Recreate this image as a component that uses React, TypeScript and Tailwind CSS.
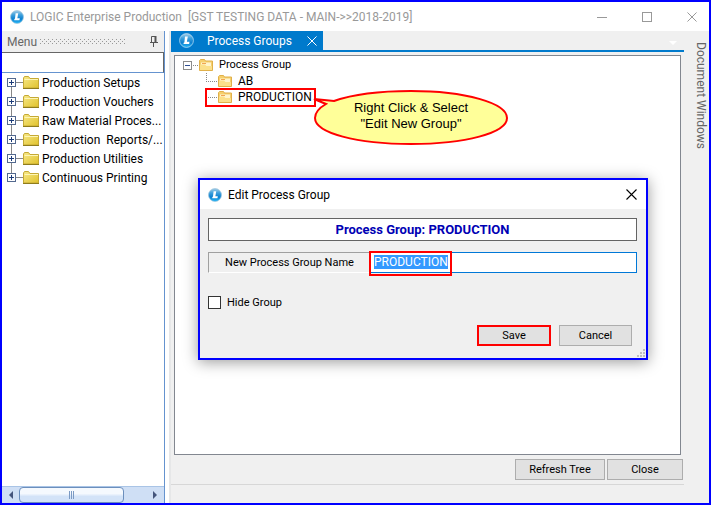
import { useEffect, useRef, useState } from "react";
import { clsx } from "clsx";

const menuItems = [
  "Production Setups",
  "Production Vouchers",
  "Raw Material Proces...",
  "Production  Reports/...",
  "Production Utilities",
  "Continuous Printing",
];

function Logo({ size, ring = false }: { size: number; ring?: boolean }) {
  return (
    <svg width={size} height={size} viewBox="0 0 16 16" className="shrink-0">
      <defs>
        <linearGradient id="logoFill" x1="0" y1="0" x2="0" y2="1">
          <stop offset="0" stopColor="#a5cde6" />
          <stop offset="0.35" stopColor="#3b9fdc" />
          <stop offset="0.65" stopColor="#0d80d0" />
          <stop offset="1" stopColor="#25b8f8" />
        </linearGradient>
      </defs>
      <circle cx="8" cy="8" r="7.4" fill="url(#logoFill)" stroke={ring ? "#b9dcf2" : "#9cc4dd"} strokeWidth="0.8" />
      <path d="M6.4 3.6h3L8.4 9.4h2.8l-.4 2.2H4.8l.3-1.6h.6z" fill="#fff" />
    </svg>
  );
}

function CloseMark({ color, size = 11 }: { color: string; size?: number }) {
  return (
    <svg width={size} height={size} viewBox="0 0 11 11">
      <path d="M.5.5l10 10M10.5.5l-10 10" stroke={color} strokeWidth="1.1" />
    </svg>
  );
}

function MenuFolder() {
  return (
    <svg width="16" height="13" viewBox="0 0 16 13" className="shrink-0">
      <defs>
        <linearGradient id="folderFill" x1="0" y1="0" x2="1" y2="1">
          <stop offset="0" stopColor="#f7e888" />
          <stop offset="1" stopColor="#e0c22c" />
        </linearGradient>
      </defs>
      <path d="M.5 12V2L1.5.5h4L7 2.5h8.5V12z" fill="url(#folderFill)" stroke="#c5a935" />
      <path d="M1.5 3.5h13.5" stroke="#fdf6b8" />
      <path d="M0 12.5h16" stroke="#8f7c1c" />
    </svg>
  );
}

function TreeFolder() {
  return (
    <svg width="14" height="12" viewBox="0 0 14 12" className="shrink-0">
      <path d="M.5 11.5v-10l1-1h4l1 1.5h7v9.5z" fill="#f6cf6c" stroke="#e0b04a" />
      <path d="M2 3.5h10v5H2z" fill="#fff4cc" />
      <path d="M1 11V5.5h5L7.5 7H13v4z" fill="#fbe08a" />
      <path d="M3 4.5h4" stroke="#f2a552" />
    </svg>
  );
}

function MenuNode({ label, first, last }: { label: string; first: boolean; last: boolean }) {
  return (
    <li>
      <button className="flex h-[19px] items-center whitespace-pre text-left">
        <svg width="16" height="19" viewBox="0 0 16 19" className="shrink-0">
          <path d="M9 9.5h7" stroke="#888" />
          {!last && <path d="M4.5 14v5" stroke="#888" />}
          {!first && <path d="M4.5 0v5" stroke="#888" />}
          <rect x=".5" y="5.5" width="8" height="8" fill="#fff" stroke="#53698f" />
          <path d="M2 9.5h5M4.5 7v5" stroke="#1c3c78" />
        </svg>
        <MenuFolder />
        <span className="ml-[3px]">{label}</span>
      </button>
    </li>
  );
}

function SidePanel() {
  return (
    <aside className="flex w-[163px] shrink-0 flex-col border-r border-[#6593cf]">
      <div className="flex h-[21px] items-center bg-[#efefef] pl-[5px] pr-[6px] text-[#666]">
        <h2 className="w-[33px]">Menu</h2>
        <svg width="86" height="6" className="shrink-0">
          <defs>
            <pattern id="grip" width="4" height="4" patternUnits="userSpaceOnUse">
              <path d="M0 .5h1M2 2.5h1" stroke="#999" />
            </pattern>
          </defs>
          <rect width="86" height="6" fill="url(#grip)" />
        </svg>
        <button className="ml-auto" aria-label="Pin menu">
          <svg width="8" height="11" viewBox="0 0 8 11">
            <path d="M1.5 6V.5h4V6M0 6.5h8M3.5 7v4" fill="none" stroke="#555" />
            <path d="M5.5 0v6" stroke="#555" strokeWidth="2" />
          </svg>
        </button>
      </div>
      <input
        aria-label="Search menu"
        className="h-[21px] w-full border-b border-t border-r border-b-[#6593cf] border-t-[#666] border-r-[#666] bg-white px-1 outline-none"
      />
      <ul className="flex-1 pl-[5px]">
        {menuItems.map((label, i) => (
          <MenuNode key={label} label={label} first={i === 0} last={i === menuItems.length - 1} />
        ))}
      </ul>
      <div className="flex h-[17px] items-stretch border-t border-[#a9c4e6] bg-[#cfdff5]">
        <button className="flex w-[17px] items-center justify-center" aria-label="Scroll left">
          <svg width="4" height="8" viewBox="0 0 4 8">
            <path d="M4 0v8L0 4z" fill="#44557c" />
          </svg>
        </button>
        <div className="flex w-[105px] items-center justify-center gap-px rounded-sm border border-[#6c8fbd] bg-linear-to-b from-[#f5f9fe] from-40% to-[#d3e3f8] to-60%">
          <span className="h-2 w-px bg-[#7b9ac4]" />
          <span className="h-2 w-px bg-[#7b9ac4]" />
          <span className="h-2 w-px bg-[#7b9ac4]" />
        </div>
        <button className="ml-auto flex w-[19px] items-center justify-center" aria-label="Scroll right">
          <svg width="4" height="8" viewBox="0 0 4 8">
            <path d="M0 0v8l4-4z" fill="#44557c" />
          </svg>
        </button>
      </div>
    </aside>
  );
}

function Callout() {
  return (
    <div className="absolute -top-px left-[107px] h-[58px] w-[196px] text-[13px] leading-4 text-black">
      <svg width="196" height="58" viewBox="0 0 196 58" className="absolute inset-0">
        <path
          d="M1 11 21 13C38 7 66 3 98 3c54 0 96 12 96 27s-42 26-96 26S2 45 2 30c0-6 4-10 11-14z"
          fill="#ffff99"
          stroke="#f00"
          strokeWidth="2"
        />
      </svg>
      <p className="relative pt-3 text-center font-['Liberation_Sans',sans-serif]">
        Right Click &amp; Select
        <br />
        "Edit New Group"
      </p>
    </div>
  );
}

function GroupNode({ label, selected = false }: { label: string; selected?: boolean }) {
  return (
    <li className="relative flex h-4 items-center">
      <svg width="12" height="16" className="shrink-0">
        <path d="M.5 0v9M0 8.5h12" stroke="#888" strokeDasharray="1 1" />
      </svg>
      <TreeFolder />
      <span className="ml-[6px] text-[12px]">{label}</span>
      {selected && (
        <>
          <span className="absolute -left-px -top-px h-[19px] w-[111px] border-2 border-[#f00]" />
          <Callout />
        </>
      )}
    </li>
  );
}

function GroupTree() {
  return (
    <div className="flex-1 border border-[#828790] bg-white pl-2 pt-px text-[11px] text-black">
      <div className="flex h-4 items-center">
        <svg width="16" height="16" className="shrink-0">
          <rect x=".5" y="4.5" width="8" height="8" fill="#fff" stroke="#8c8c8c" />
          <path d="M2 8.5h5" stroke="#2f4f93" />
          <path d="M10 8.5h6" stroke="#888" strokeDasharray="1 1" />
        </svg>
        <TreeFolder />
        <span className="ml-[6px]">Process Group</span>
      </div>
      <ul className="pl-[23px]">
        <GroupNode label="AB" />
        <GroupNode label="PRODUCTION" selected />
      </ul>
    </div>
  );
}

function FormButton({ label, className }: { label: string; className?: string }) {
  return <button className={clsx("h-[21px] bg-[#e1e1e1] text-[11px] text-black", className)}>{label}</button>;
}

function EditDialog() {
  const nameRef = useRef<HTMLInputElement>(null);
  const [name, setName] = useState("PRODUCTION");

  useEffect(() => {
    nameRef.current?.focus();
    nameRef.current?.select();
  }, []);

  return (
    <div
      role="dialog"
      aria-label="Edit Process Group"
      className="absolute left-[196px] right-[61px] top-[176px] border-2 border-[#00f] bg-[#f0f0f0] text-black shadow-[0_2px_14px_rgba(0,0,0,0.4)]"
    >
      <div className="flex h-[29px] items-center bg-white pl-2 pr-[9px]">
        <Logo size={14} />
        <h2 className="ml-[6px]">Edit Process Group</h2>
        <button className="ml-auto" aria-label="Close dialog">
          <CloseMark color="#000" />
        </button>
      </div>
      <form className="pb-3 pl-2 pr-[9px] pt-[9px] text-[11px]" onSubmit={(e) => e.preventDefault()}>
        <h3 className="h-[23px] border border-[#646464] bg-white text-center text-[13px] font-bold leading-[22px] text-[#0000b4]">
          Process Group: PRODUCTION
        </h3>
        <div className="mt-[11px] flex h-[21px]">
          <label
            htmlFor="group-name"
            className="w-[162px] border border-b-white border-l-[#a0a0a0] border-r-0 border-t-[#a0a0a0] text-center leading-5"
          >
            New Process Group Name
          </label>
          <div className="relative flex-1">
            <input
              id="group-name"
              ref={nameRef}
              value={name}
              onChange={(e) => setName(e.target.value)}
              className="h-full w-full border border-[#0078d7] bg-white pb-[2px] pl-[3px] text-[12px] leading-[14px] outline-none selection:bg-[#3399ff] selection:text-white"
            />
            <span className="pointer-events-none absolute -left-px -top-px h-[25px] w-[83px] border-2 border-[#f00]" />
          </div>
        </div>
        <label className="mt-[22px] flex h-[15px] items-center gap-[6px]">
          <input type="checkbox" className="size-[13px] appearance-none border border-[#333] bg-white" />
          Hide Group
        </label>
        <div className="mt-[15px] flex justify-end gap-2 pr-[5px]">
          <FormButton label="Save" className="w-[74px] border-2 border-[#f00]" />
          <FormButton label="Cancel" className="w-[73px] border border-[#adadad]" />
        </div>
      </form>
      <svg width="8" height="8" className="absolute bottom-px right-px">
        <path d="M6 1h2M3 4h2M6 4h2M0 7h2M3 7h2M6 7h2" stroke="#bfbfbf" strokeWidth="2" />
      </svg>
    </div>
  );
}

function DocumentArea() {
  return (
    <main className="flex min-w-0 flex-1 flex-col border-l-2 border-[#e6e7e8] bg-[#f0f0f0]">
      <div className="flex h-[21px] items-start justify-between border-b-2 border-[#007acc]">
        <div className="flex h-full w-[152px] items-center bg-[#007acc] pl-2 pr-[6px] text-white">
          <Logo size={15} ring />
          <span className="ml-[13px]">Process Groups</span>
          <button className="ml-auto" aria-label="Close tab">
            <CloseMark color="#fff" size={10} />
          </button>
        </div>
        <button className="mr-[7px] mt-[10px]" aria-label="Open documents">
          <svg width="8" height="4" viewBox="0 0 8 4">
            <path d="M0 0h8L4 4z" fill="#fff" />
          </svg>
        </button>
      </div>
      <div className="flex flex-1 flex-col pl-[3px] pr-[3px] pt-[3px]">
        <GroupTree />
      </div>
      <div className="flex justify-end gap-[2px] border-b border-[#d7d7d7] pb-1 pr-px pt-1">
        <FormButton label="Refresh Tree" className="w-[90px] border border-[#adadad]" />
        <FormButton label="Close" className="w-[76px] border border-[#adadad]" />
      </div>
      <div className="h-[18px]" />
    </main>
  );
}

export default function App() {
  return (
    <div className="relative flex h-screen flex-col overflow-hidden border-2 border-[#00f] bg-white font-[Roboto,sans-serif] text-[12px] leading-4 text-black">
      <header className="flex h-[29px] shrink-0 items-center pl-2 text-[#999]">
        <Logo size={14} />
        <h1 className="ml-[6px] whitespace-pre">LOGIC Enterprise Production  [GST TESTING DATA - MAIN-&gt;&gt;2018-2019]</h1>
        <div className="ml-auto flex items-center gap-[35px] pr-3">
          <button aria-label="Minimize">
            <svg width="10" height="10">
              <path d="M0 5.5h10" stroke="#999" />
            </svg>
          </button>
          <button aria-label="Maximize">
            <svg width="10" height="10">
              <rect x=".5" y=".5" width="9" height="9" fill="none" stroke="#999" />
            </svg>
          </button>
          <button aria-label="Close">
            <CloseMark color="#999" size={10} />
          </button>
        </div>
      </header>
      <div className="flex min-h-0 flex-1 gap-1">
        <SidePanel />
        <div className="flex min-w-0 flex-1 bg-[#f0f0f0]">
          <DocumentArea />
          <div className="w-[25px] shrink-0 pl-[5px] pt-[11px] text-[#666] [writing-mode:vertical-rl]">
            <span>Document Windows</span>
          </div>
        </div>
      </div>
      <EditDialog />
    </div>
  );
}
